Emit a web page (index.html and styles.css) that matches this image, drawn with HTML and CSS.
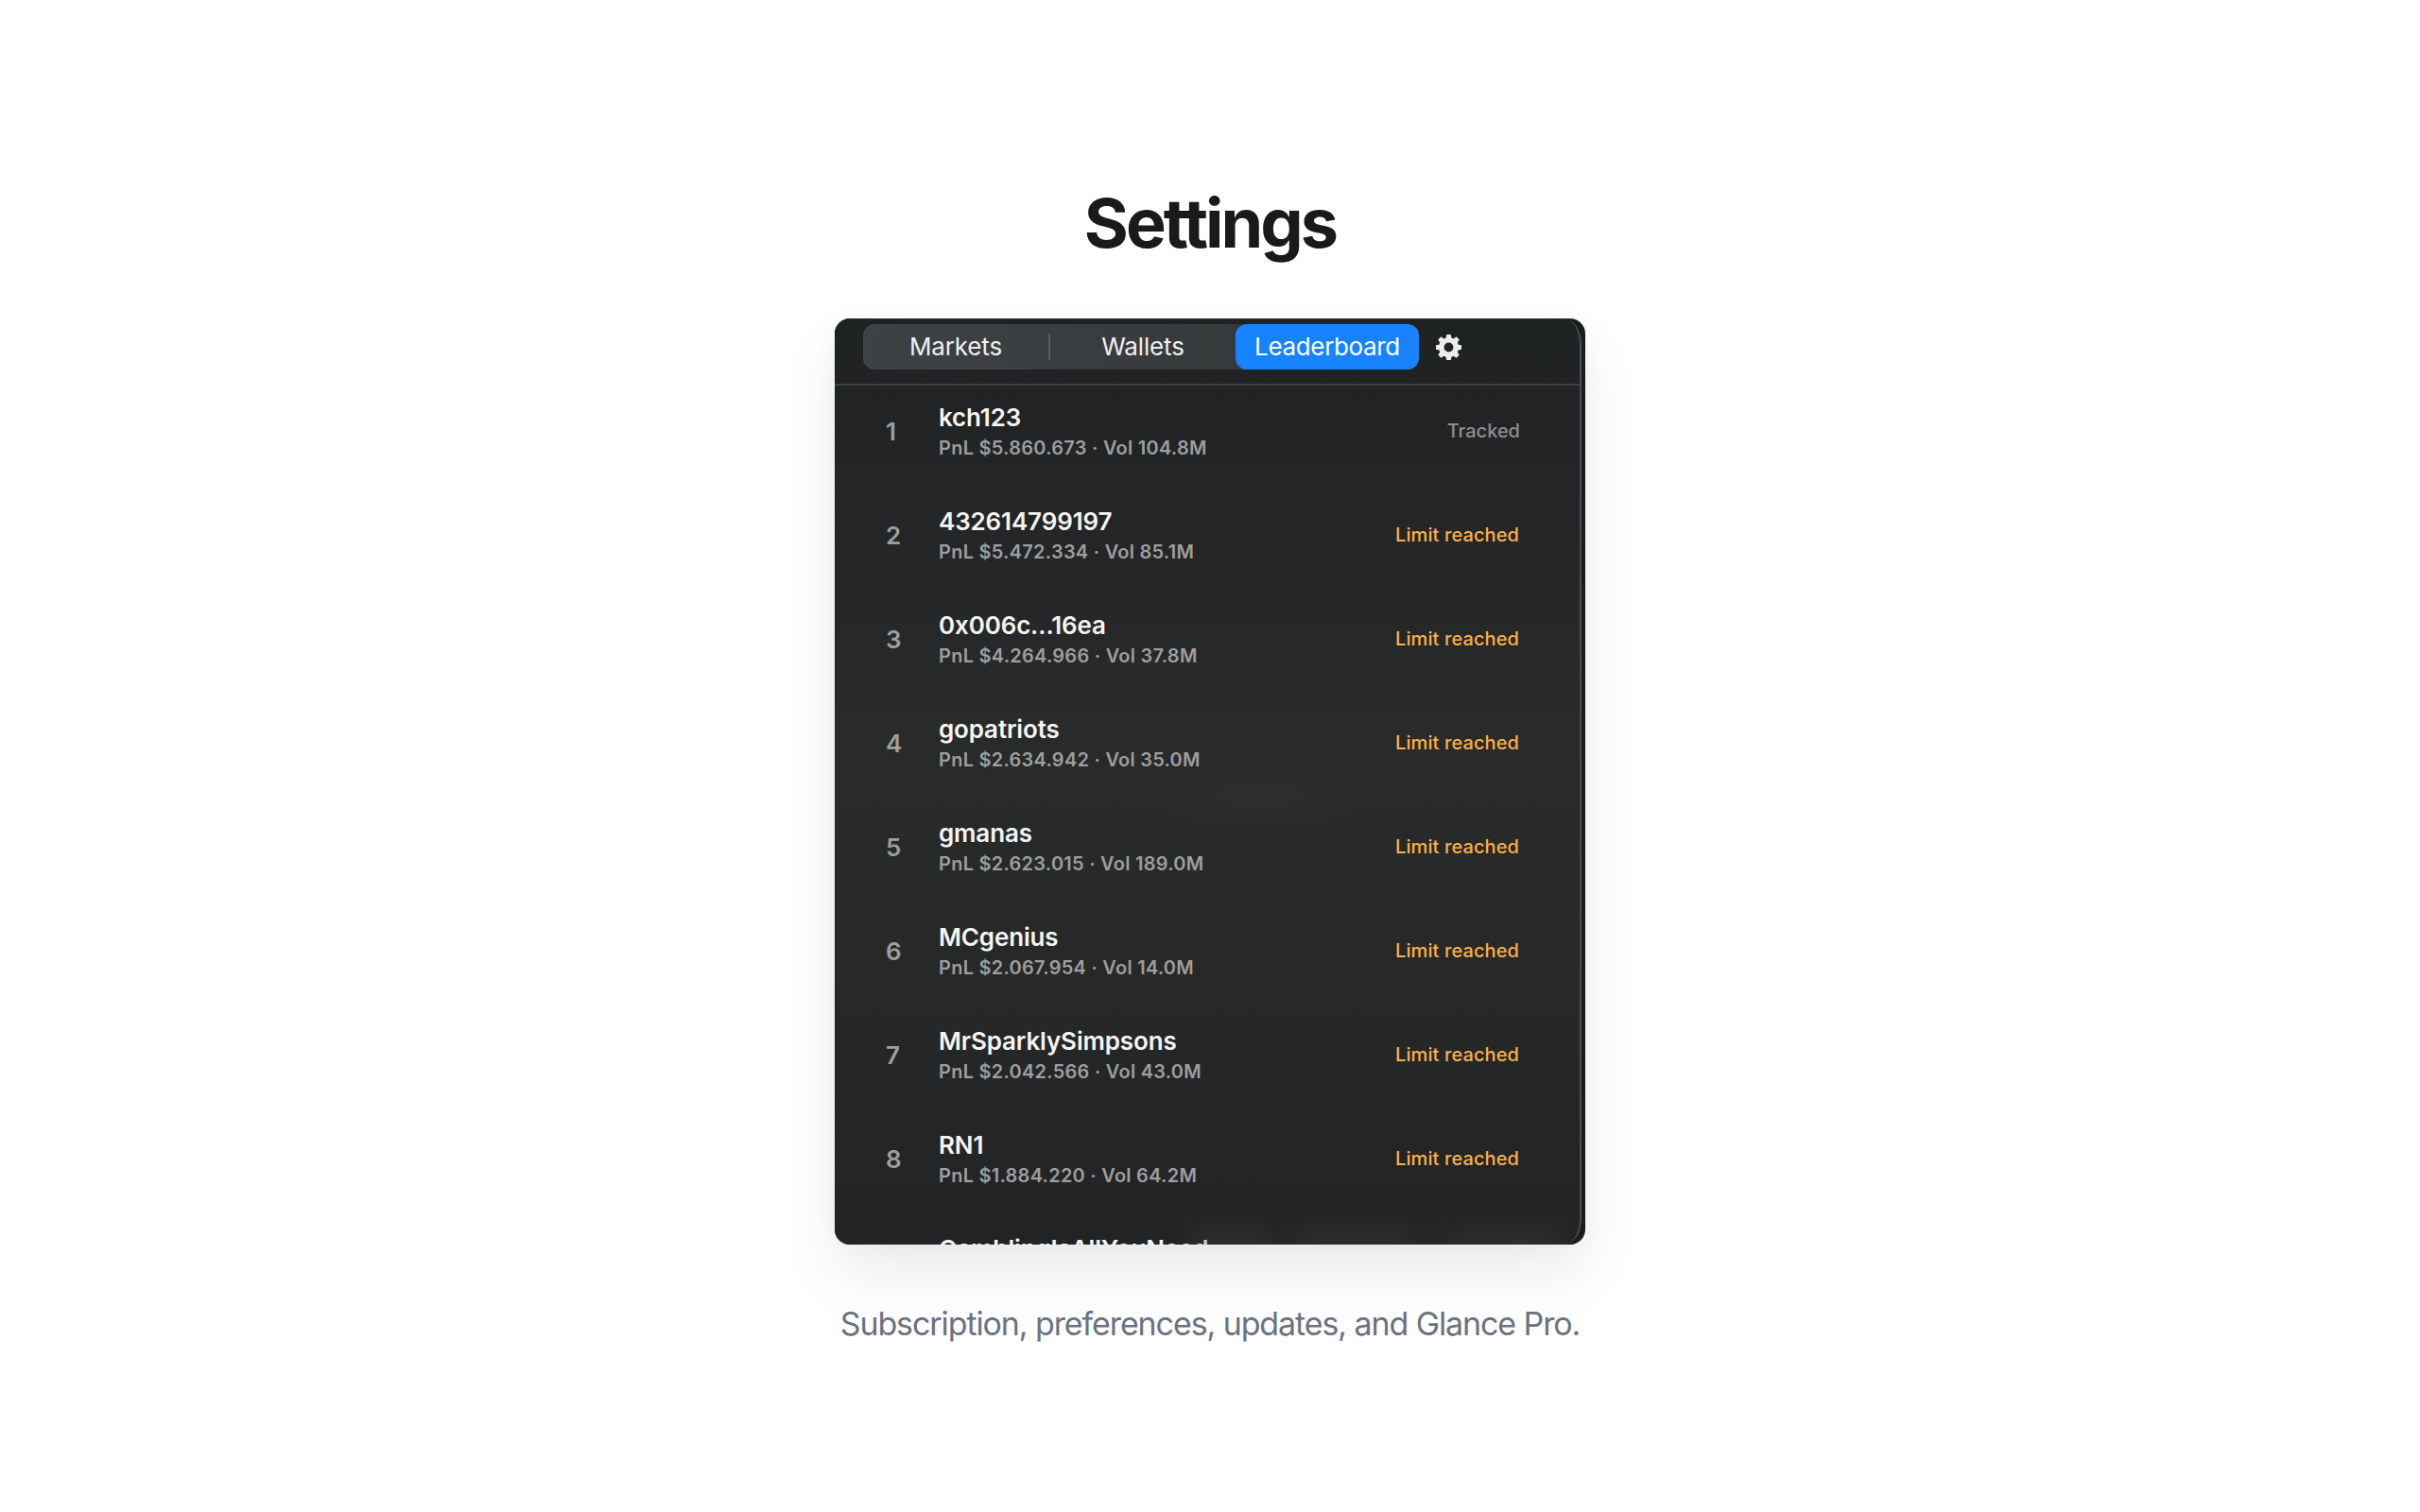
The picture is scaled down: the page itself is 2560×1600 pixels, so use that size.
FILE: index.html
```html
<!DOCTYPE html>
<html lang="en">
<head>
<meta charset="utf-8">
<title>Settings</title>
<link rel="stylesheet" href="styles.css">
</head>
<body>
<main class="section">
  <h1 class="title">Settings</h1>
  <div class="shot">
    <div class="panel">
      <header class="topbar">
        <div class="segments">
          <span class="seg seg-markets">Markets</span>
          <span class="seg-sep"></span>
          <span class="seg seg-wallets">Wallets</span>
          <span class="seg seg-active">Leaderboard</span>
        </div>
        <svg class="gear" viewBox="0 0 24 24" aria-hidden="true"><path fill-rule="evenodd" d="M10 0h4l.6 3.1c.7.2 1.3.5 1.9.8l2.7-1.8 2.8 2.8-1.8 2.6c.3.6.6 1.3.8 2L24 10v4l-3 .6c-.2.7-.5 1.3-.8 1.9l1.8 2.7-2.8 2.8-2.7-1.8c-.6.3-1.2.6-1.9.8L14 24h-4l-.6-3c-.7-.2-1.3-.5-1.9-.8l-2.7 1.8L2 19.2l1.8-2.7c-.3-.6-.6-1.2-.8-1.9L0 14v-4l3-.5c.2-.7.5-1.4.8-2L2 4.9 4.8 2.1l2.7 1.8c.6-.3 1.2-.6 1.9-.8L10 0zm2 7.6a4.4 4.4 0 1 0 0 8.800a4.4 4.4 0 0 0 0-8.800z"/></svg>
      </header>
      <div class="list">
        <div class="row"><span class="rank">1</span><div class="who"><div class="name">kch123</div><div class="stats">PnL $5.860.673 · Vol 104.8M</div></div><span class="state tracked">Tracked</span></div>
        <div class="row"><span class="rank">2</span><div class="who"><div class="name">432614799197</div><div class="stats">PnL $5.472.334 · Vol 85.1M</div></div><span class="state limit">Limit reached</span></div>
        <div class="row"><span class="rank">3</span><div class="who"><div class="name">0x006c...16ea</div><div class="stats">PnL $4.264.966 · Vol 37.8M</div></div><span class="state limit">Limit reached</span></div>
        <div class="row"><span class="rank">4</span><div class="who"><div class="name">gopatriots</div><div class="stats">PnL $2.634.942 · Vol 35.0M</div></div><span class="state limit">Limit reached</span></div>
        <div class="row"><span class="rank">5</span><div class="who"><div class="name">gmanas</div><div class="stats">PnL $2.623.015 · Vol 189.0M</div></div><span class="state limit">Limit reached</span></div>
        <div class="row"><span class="rank">6</span><div class="who"><div class="name">MCgenius</div><div class="stats">PnL $2.067.954 · Vol 14.0M</div></div><span class="state limit">Limit reached</span></div>
        <div class="row"><span class="rank">7</span><div class="who"><div class="name">MrSparklySimpsons</div><div class="stats">PnL $2.042.566 · Vol 43.0M</div></div><span class="state limit">Limit reached</span></div>
        <div class="row"><span class="rank">8</span><div class="who"><div class="name">RN1</div><div class="stats">PnL $1.884.220 · Vol 64.2M</div></div><span class="state limit">Limit reached</span></div>
        <div class="row"><span class="rank"></span><div class="who who-clipped"><div class="name">GamblingIsAllYouNeed</div></div></div>
      </div>
      <div class="glow"></div>
      <div class="bottom-blur"></div>
    </div>
  </div>
  <p class="caption">Subscription, preferences, updates, and Glance Pro.</p>
</main>
</body>
</html>
```
FILE: styles.css
```css
* { box-sizing: border-box; }
html, body { margin: 0; height: 100%; background: #fff; }
body { font-family: Inter, "Liberation Sans", sans-serif; }
.section {
  display: flex;
  flex-direction: column;
  align-items: center;
  padding-top: 188px;
}
.title {
  margin: 0 0 53px;
  font-size: 72px;
  line-height: 95px;
  font-weight: 700;
  letter-spacing: -3px;
  color: #1a1a1a;
}
.shot {
  width: 794px;
  height: 980px;
  margin-top: 1px;
  border-radius: 16px;
  background: #1a1c1d;
  overflow: hidden;
  box-shadow: 0 32px 64px rgba(0, 0, 0, 0.08), 0 0 24px rgba(0, 0, 0, 0.03);
}
.panel {
  position: relative;
  width: 790px;
  height: 980px;
  overflow: hidden;
  background: linear-gradient(180deg, #1f2223 0%, #232526 20%, #292a2a 45%, #272828 70%, #222324 100%);
  border-right: 2px solid #4a4f51;
  border-radius: 0 18px 18px 0 / 0 28px 28px 0;
}
.topbar {
  display: flex;
  align-items: flex-start;
  height: 71px;
  padding: 6px 0 0 30px;
  border-bottom: 2px solid #3c4040;
}
.segments {
  display: flex;
  align-items: center;
  width: 588px;
  height: 48px;
  border-radius: 12px;
  background: linear-gradient(90deg, #3f4244, #36393a 70%);
  color: #f0f0f0;
  font-size: 26px;
  letter-spacing: -0.15px;
}
.seg { text-align: center; line-height: 48px; }
.seg-markets { width: 196px; }
.seg-sep { width: 2px; height: 28px; background: #5a5d5e; }
.seg-wallets { width: 196px; }
.seg-active {
  width: 194px;
  border-radius: 12px;
  background: #1783ff;
  color: #fff;
  letter-spacing: -0.35px;
}
.gear { width: 27px; height: 27px; margin: 11px 0 0 18px; fill: #ededed; }
.list { margin-top: -7px; }
.row {
  display: flex;
  align-items: center;
  height: 110px;
  padding: 0 64px 0 54px;
}
.rank {
  width: 24px;
  font-size: 26px;
  font-weight: 600;
  color: #9e9e9e;
}
.who { flex: 1; margin-left: 32px; }
.who-clipped { padding-bottom: 28px; }
.name { font-size: 26px; line-height: 34px; font-weight: 600; color: #f4f4f4; letter-spacing: -0.15px; }
.stats { padding-top: 1px; font-size: 20px; line-height: 28px; font-weight: 600; color: #9d9e9f; letter-spacing: 0.25px; }
.state { font-size: 20px; font-weight: 400; letter-spacing: 0.2px; }
.tracked { color: #8e8f90; font-weight: 500; letter-spacing: 0; margin-right: -1px; }
.limit { color: #fbb04a; font-weight: 500; letter-spacing: 0.1px; }
.glow {
  position: absolute;
  left: 330px;
  top: 470px;
  width: 240px;
  height: 70px;
  border-radius: 50%;
  background: radial-gradient(closest-side, rgba(255, 255, 255, 0.025), rgba(255, 255, 255, 0));
}
.bottom-blur {
  position: absolute;
  left: 360px;
  right: 0;
  bottom: -8px;
  height: 44px;
  filter: blur(5px);
  background: linear-gradient(90deg, rgba(70, 72, 74, 0), rgba(70, 72, 74, 0.35) 8%, rgba(70, 72, 74, 0.38) 20%, rgba(50, 54, 56, 0.12) 26%, rgba(70, 72, 74, 0.35) 34%, rgba(70, 72, 74, 0.35) 55%, rgba(50, 56, 58, 0.1) 62%, rgba(70, 72, 74, 0.3) 72%, rgba(70, 72, 74, 0.35) 92%, rgba(70, 72, 74, 0));
  -webkit-mask-image: linear-gradient(180deg, transparent, #000);
  mask-image: linear-gradient(180deg, transparent, #000);
}
.caption {
  margin: 60px 0 0;
  font-size: 34px;
  line-height: 48px;
  color: #6b7280;
  letter-spacing: -1.1px;
}
```
